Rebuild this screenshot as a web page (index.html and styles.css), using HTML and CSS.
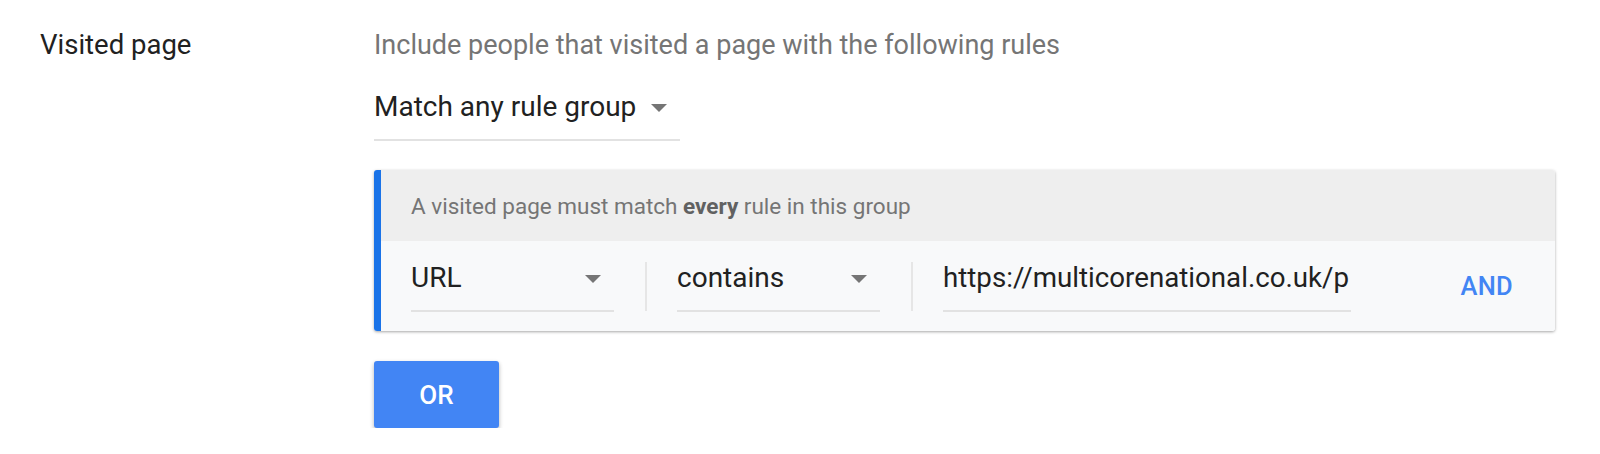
FILE: index.html
```html
<!DOCTYPE html>
<html lang="en">
<head>
<meta charset="utf-8">
<title>Visited page</title>
<link rel="stylesheet" href="styles.css">
</head>
<body>
<div class="setting">
  <div class="label">Visited page</div>
  <div class="content">
    <div class="desc">Include people that visited a page with the following rules</div>
    <div class="field match">
      <span class="field-text">Match any rule group</span>
      <span class="arrow"></span>
    </div>
    <div class="card">
      <div class="card-head">A visited page must match&nbsp;<b>every</b>&nbsp;rule in this group</div>
      <div class="card-row">
        <div class="field f-url">
          <span class="field-text">URL</span>
          <span class="arrow"></span>
        </div>
        <div class="divider"></div>
        <div class="field f-op">
          <span class="field-text">contains</span>
          <span class="arrow"></span>
        </div>
        <div class="divider"></div>
        <div class="field f-value">
          <span class="field-text">https://multicorenational.co.uk/p</span>
        </div>
        <div class="and">AND</div>
      </div>
    </div>
    <button class="or-btn">OR</button>
  </div>
</div>
</body>
</html>
```

FILE: styles.css
```css
html, body {
  margin: 0;
  padding: 0;
  background: #ffffff;
}

body {
  font-family: Roboto, "Noto Sans", "Liberation Sans", sans-serif;
  color: #212121;
}

.setting {
  display: flex;
  padding: 27px 0 0 40px;
}

.label {
  width: 334px;
  flex: none;
  font-size: 27.5px;
  line-height: 36px;
  color: #212121;
}

.content {
  display: flex;
  flex-direction: column;
  align-items: flex-start;
}

.desc {
  font-size: 27px;
  line-height: 36px;
  color: #757575;
}

.field {
  display: flex;
  align-items: center;
  justify-content: space-between;
  padding-bottom: 14px;
  border-bottom: 2px solid #e2e2e2;
  font-size: 28px;
  line-height: 36px;
  color: #212121;
  box-sizing: border-box;
}

.field-text {
  white-space: nowrap;
  overflow: hidden;
}

.arrow {
  width: 0;
  height: 0;
  border-left: 8.5px solid transparent;
  border-right: 8.5px solid transparent;
  border-top: 8px solid #757575;
  margin-right: 13px;
  margin-top: 2px;
  flex: none;
}

.match {
  margin-top: 26px;
  width: 306px;
}

.card {
  margin-top: 29px;
  width: 1181px;
  border-radius: 3px;
  border-left: 7px solid #1a73e8;
  box-sizing: border-box;
  box-shadow: 0 1px 3px rgba(0, 0, 0, 0.35);
  overflow: hidden;
}

.card-head {
  height: 71px;
  display: flex;
  align-items: center;
  padding-left: 30px;
  background: #eeeeee;
  font-size: 22.5px;
  color: #757575;
}

.card-head b {
  font-weight: 700;
  color: #616161;
}

.card-row {
  height: 90px;
  display: flex;
  align-items: center;
  padding-left: 30px;
  padding-right: 42px;
  background: #f8f9fa;
}

.f-url,
.f-op {
  width: 203px;
}

.f-value {
  width: 408px;
  font-size: 27.7px;
}

.divider {
  width: 2px;
  height: 49px;
  background: #e6e6e6;
  margin: 0 30px 0 31px;
}

.and {
  margin-left: auto;
  font-size: 25.5px;
  font-weight: 500;
  color: #4285f4;
  letter-spacing: 0.3px;
}

.or-btn {
  margin-top: 30px;
  width: 125px;
  height: 67px;
  border: none;
  border-radius: 3px;
  background: #4285f4;
  color: #ffffff;
  font-family: Roboto, "Noto Sans", "Liberation Sans", sans-serif;
  font-size: 26px;
  font-weight: 500;
  box-shadow: 0 2px 4px rgba(0, 0, 0, 0.3);
  padding: 0;
}
```
